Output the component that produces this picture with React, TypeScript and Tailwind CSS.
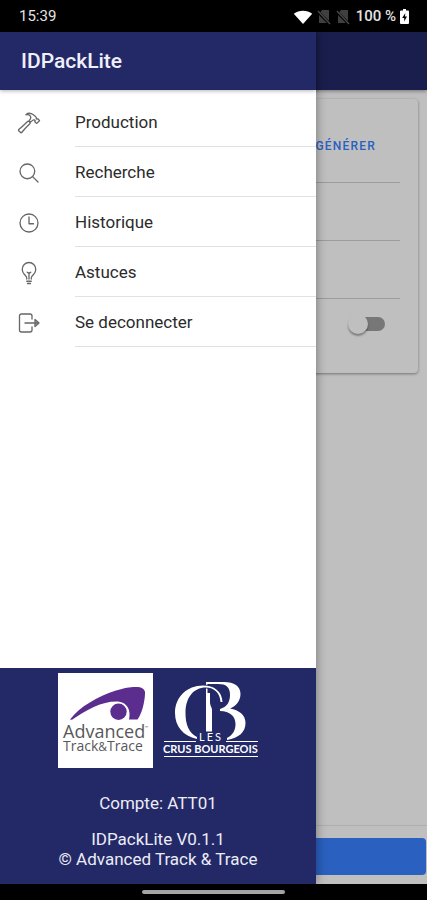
import type { ReactNode } from "react";
import { IoBulbOutline, IoHammerOutline, IoSearchOutline, IoTimeOutline } from "react-icons/io5";

function ExitIcon() {
    return (
        <svg viewBox="0 0 24 24" className="size-6" fill="none" stroke="currentColor" strokeWidth="1.300" strokeLinejoin="round" strokeLinecap="round">
            <path d="M15 8V5q0-2-2-2H4.500q-2 0-2 2v14q0 2 2 2H13q2 0 2-2v-3" />
            <path d="M8 12h13" />
            <path d="M18 8.500L22 12l-4 3.500z" fill="currentColor" fillOpacity="0.4" />
        </svg>
    );
}

const menu: { label: string; icon: ReactNode }[] = [
    { label: "Production", icon: <IoHammerOutline className="size-6 [&_*]:stroke-[28px]" /> },
    { label: "Recherche", icon: <IoSearchOutline className="size-6 [&_*]:stroke-[28px]" /> },
    { label: "Historique", icon: <IoTimeOutline className="size-6 [&_*]:stroke-[28px]" /> },
    { label: "Astuces", icon: <IoBulbOutline className="size-6 [&_*]:stroke-[28px]" /> },
    { label: "Se deconnecter", icon: <ExitIcon /> },
];

function NoSim() {
    return (
        <svg viewBox="0 0 14 16" className="w-3.5 h-4" fill="none">
            <path d="M5 1h7v13H2V5z" fill="#3f3f3f" />
            <path d="M0 2l13 13" stroke="#000" strokeWidth="3" />
            <path d="M1 2l12 13" stroke="#4a4a4a" strokeWidth="1.3" />
        </svg>
    );
}

function StatusBar() {
    return (
        <div className="h-8 shrink-0 bg-black text-[#e4e4e4] flex items-center justify-between pt-px pl-[19px] pr-[18px] text-[15px]">
            <span>15:39</span>
            <div className="flex items-center font-medium">
                <svg viewBox="0 0 20 16" className="w-5 h-4 mr-1">
                    <path d="M10 15L.8 4.8C5.700.8 14.300.8 19.200 4.8z" fill="#fff" />
                </svg>
                <NoSim />
                <span className="w-[5px]" />
                <NoSim />
                <span className="ml-1.5 mr-1">100 %</span>
                <svg viewBox="0 0 9 15" className="w-[9px] h-[15px]">
                    <path d="M3 0h3v1.500h2q1 0 1 1V14q0 1-1 1H1q-1 0-1-1V2.500q0-1 1-1h2z" fill="#fff" />
                    <path d="M5.300 4L2.200 9h2v3.500L7 7.500H5z" fill="#000" />
                </svg>
            </div>
        </div>
    );
}

function TrackTraceLogo() {
    return (
        <svg viewBox="0 0 95 95" className="w-[95px] h-[95px] bg-white" role="img" aria-label="Advanced Track & Trace">
            <path
                d="M12 46.500C17 40 24 34 31 30C41 24 49 20 58 17.500C68 14.500 74 13.500 80 14C85 14.500 87.500 17 87 21C86.500 30 84 40 79.500 46.500H71C73 38 70 29.500 60 28.500C44 28 30 36 14 46.800z"
                fill="#5b2d8e"
            />
            <circle cx="60.500" cy="38.800" r="8.200" fill="#5b2d8e" />
            <g fill="#58585a" fontFamily="'Open Sans', sans-serif">
                <text x="5" y="65" fontSize="18">Advanced</text>
                <text x="5" y="78" fontSize="14">
                    Track<tspan fontSize="12">&amp;</tspan>Trace
                </text>
                <text x="87" y="56" fontSize="4">™</text>
            </g>
        </svg>
    );
}

function CrusBourgeoisLogo() {
    return (
        <svg viewBox="0 0 102 84" className="w-[102px] h-[84px]" role="img" aria-label="Les Crus Bourgeois" fill="#fff">
            <path d="M46 4H64C74 4 80.500 8 80.500 16C80.500 23 76 28 70 30.500C79 32 85.500 37 85.500 45C85.500 54 79 60 67 62V60C73 57 75.500 52 75.500 46C75.500 38 70 33.500 60 33V31C67 29 70 24 70 17C70 9 66 6 58 6H46z" />
            <path d="M46 4h1.500v11h2.500v9c0 4 2 5 2 8v21.500h-6z" />
            <path
                d="M60.500 24C60 14 53 9.500 46 9.500C33 9.500 25.500 20 25.500 35C25.500 47 29 55 37 59V61C23 58 15 48 15 35C15 19 27 7.500 43 7.500C54 7.500 62 13 62.500 24z"
                stroke="#232967"
                strokeWidth="2"
                paintOrder="stroke"
            />
            <path d="M4 63.500H36M66 63.500H98M4 78.500H98" stroke="#fff" strokeWidth="1" />
            <text x="39" y="63" fontSize="11" letterSpacing="2" fontFamily="Lato, sans-serif">LES</text>
            <text x="3" y="75" fontSize="11" fontWeight="700" fontFamily="Lato, sans-serif">CRUS BOURGEOIS</text>
        </svg>
    );
}

function Drawer() {
    return (
        <aside className="absolute inset-y-0 left-0 w-[74%] flex flex-col bg-white shadow-[0_0_10px_rgba(0,0,0,0.4)]">
            <header className="h-[58px] shrink-0 bg-[#232967] flex items-center pt-px pl-[21px] shadow-[0_1px_4px_rgba(0,0,0,0.3)]">
                <h1 className="text-[21px] font-medium text-[#f0f0fa]">IDPackLite</h1>
            </header>
            <nav className="grow pt-[7px]">
                {menu.map(({ label, icon }) => (
                    <a key={label} href="#" className="flex items-center pl-[17px] text-[#2b2b2b]">
                        <span className="shrink-0 pt-0.5 text-[#666666]">{icon}</span>
                        <span className="grow ml-[34px] h-[50px] pt-0.5 flex items-center border-b border-[#e2e2e2] text-[17px]">
                            {label}
                        </span>
                    </a>
                ))}
            </nav>
            <footer className="shrink-0 bg-[#232967] text-[#ececf6] text-center text-[17px]/5 pt-[5px] pb-[15px]">
                <div className="flex justify-center gap-[7px] pl-1">
                    <TrackTraceLogo />
                    <div className="pt-[5px]">
                        <CrusBourgeoisLogo />
                    </div>
                </div>
                <p className="mt-[25px]">Compte: ATT01</p>
                <p className="mt-4">
                    IDPackLite V0.1.1
                    <br />© Advanced Track &amp; Trace
                </p>
            </footer>
        </aside>
    );
}

export default function App() {
    return (
        <div className="min-h-screen flex flex-col font-[Roboto,sans-serif]">
            <StatusBar />
            <div className="relative grow flex flex-col">
                <div className="grow flex flex-col bg-white">
                    <div className="h-[58px] shrink-0 bg-[#232967] shadow-[0_1px_4px_rgba(0,0,0,0.4)]" />
                    <main className="grow px-[9px] pt-[9px]">
                        <section className="rounded pr-[18px] pl-4 pb-6 shadow-[0_1px_3px_rgba(0,0,0,0.4)]">
                            <div className="h-[84px] flex items-center justify-end pr-6 pt-2.5 border-b border-[#d0d0d0]">
                                <button className="text-xs font-medium tracking-widest text-[#3880ff]">GÉNÉRER</button>
                            </div>
                            <div className="h-[58px] border-b border-[#d0d0d0]" />
                            <div className="h-[58px] border-b border-[#d0d0d0]" />
                            <div className="h-[50px] flex items-center justify-end pr-[15px]">
                                <input
                                    type="checkbox"
                                    aria-label="Option"
                                    className="appearance-none w-[37px] h-3.5 rounded-full bg-[linear-gradient(to_right,transparent_10px,#9f9f9f_10px)] flex items-center before:size-5 before:shrink-0 before:rounded-full before:bg-white before:shadow-[0_2px_2px_rgba(0,0,0,0.35)]"
                                />
                            </div>
                        </section>
                    </main>
                    <div className="shrink-0 border-t border-[#e8e8e8] pt-3 pb-[9px] px-px">
                        <button aria-label="Valider" className="block w-full h-[37px] rounded bg-[#3880ff]" />
                    </div>
                </div>
                <div className="absolute inset-0 bg-black/25" />
                <Drawer />
            </div>
            <div className="h-4 shrink-0 bg-black flex items-center justify-center">
                <div className="w-1/3 h-1 rounded-full bg-[#a9a9a9]" />
            </div>
        </div>
    );
}
